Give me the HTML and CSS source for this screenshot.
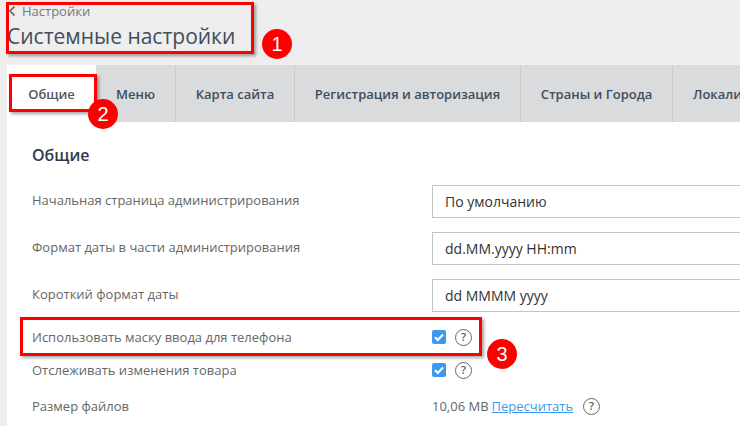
FILE: index.html
```html
<!DOCTYPE html>
<html lang="ru">
<head>
<meta charset="utf-8">
<title>Системные настройки</title>
<link rel="stylesheet" href="styles.css">
</head>
<body>
<header class="head">
  <a class="back"><svg class="chev" width="8" height="12" viewBox="0 0 8 12"><path d="M6.5 1.5 2 6l4.500 4.500" fill="none" stroke="#777" stroke-width="1.800"/></svg>Настройки</a>
  <h1 class="title">Системные настройки</h1>
</header>
<nav class="tabs">
  <a class="tab tab-active">Общие</a>
  <a class="tab t-menu">Меню</a>
  <a class="tab t-map">Карта сайта</a>
  <a class="tab t-reg">Регистрация и авторизация</a>
  <a class="tab t-geo">Страны и Города</a>
  <a class="tab t-loc">Локализация</a>
</nav>
<main class="panel">
  <h2 class="section">Общие</h2>
  <div class="row row-input"><label class="lbl">Начальная страница администрирования</label><div class="input">По умолчанию</div></div>
  <div class="row row-input"><label class="lbl">Формат даты в части администрирования</label><div class="input">dd.MM.yyyy HH:mm</div></div>
  <div class="row row-input"><label class="lbl">Короткий формат даты</label><div class="input">dd MMMM yyyy</div></div>
  <div class="row row-check r1"><label class="lbl">Использовать маску ввода для телефона</label><div class="val">
    <svg class="cb" width="14" height="14" viewBox="0 0 14 14"><rect width="14" height="14" rx="2" fill="#3d99ee"/><path d="M3 7.2 5.8 10 11 4.6" fill="none" stroke="#fff" stroke-width="2.2"/></svg>
    <span class="help">?</span></div></div>
  <div class="row row-check r2"><label class="lbl">Отслеживать изменения товара</label><div class="val">
    <svg class="cb" width="14" height="14" viewBox="0 0 14 14"><rect width="14" height="14" rx="2" fill="#3d99ee"/><path d="M3 7.2 5.8 10 11 4.6" fill="none" stroke="#fff" stroke-width="2.2"/></svg>
    <span class="help">?</span></div></div>
  <div class="row row-check r3"><label class="lbl">Размер файлов</label><div class="val"><span class="size">10,06 MB</span><a class="link">Пересчитать</a><span class="help help-far">?</span></div></div>
</main>
<div class="mark m1"></div>
<div class="badge b1">1</div>
<div class="mark m2"></div>
<div class="badge b2">2</div>
<div class="mark m3"></div>
<div class="badge b3">3</div>
</body>
</html>
```

FILE: styles.css
```css
html, body { margin: 0; padding: 0; }
body {
  width: 740px; height: 426px; overflow: hidden; position: relative;
  background: #eeeeee; font-family: "Open Sans", sans-serif; color: #666;
}
.head { padding: 2px 0 0 8px; height: 62px; box-sizing: border-box; }
.back { display: flex; align-items: center; gap: 6px; font-size: 13px; line-height: 18px; color: #777; }
.title { margin: 2px 0 0 -1px; font-size: 21px; line-height: 29px; font-weight: 400; color: #3f4d5c; }
.tabs {
  display: flex; margin-left: 7px; height: 57px; background: #dadbdd; margin-top: 3px; overflow: hidden;
}
.tab {
  box-sizing: border-box; flex: none; display: flex; align-items: center; justify-content: center;
  font-size: 13px; font-weight: 600; color: #3f4d5c; border-right: 1px solid #c8cace; margin-top: 1px;
}
.tab-active { width: 89px; background: #fff; color: #555; border-right: 0; margin-top: 0; }
.t-menu { width: 80px; }
.t-map { width: 119px; }
.t-reg { width: 226px; }
.t-geo { width: 152px; }
.t-loc { width: 120px; justify-content: flex-start; padding-left: 20px; border-right: 0; }
.panel { margin-left: 7px; background: #fff; height: 304px; padding: 22px 0 0 25px; box-sizing: border-box; }
.section { margin: 0 0 19px; font-size: 16px; line-height: 22px; font-weight: 600; color: #2f3b4a; }
.row { display: flex; align-items: center; }
.lbl { width: 400px; flex: none; font-size: 13px; color: #666; }
.row-input { height: 33px; margin-bottom: 14px; }
.row-input .lbl { padding-bottom: 4px; }
.input {
  width: 320px; flex: none; height: 33px; box-sizing: border-box; border: 1px solid #c4c4c4; padding-left: 12px;
  display: flex; align-items: center; font-size: 14px; color: #333; background: #fff;
}
.val { display: flex; align-items: center; font-size: 13px; color: #666; }
.row-check { height: 24px; }
.r1 { margin-top: -1px; }
.r2 { margin-top: 9px; }
.r3 { margin-top: 12px; }
.help {
  box-sizing: border-box; width: 17px; height: 17px; margin-left: 9px; border: 1.5px solid #666; border-radius: 50%;
  font-size: 11px; line-height: 14px; text-align: center; font-weight: 600; color: #555;
}
.size { margin-right: 3px; }
.link { color: #3d99ee; text-decoration: underline; }
.help-far { margin-left: 10px; }
.mark { position: absolute; box-sizing: border-box; border: 3px solid #f00; box-shadow: 2px 2px 3px rgba(0,0,0,.35); }
.m1 { left: 6px; top: 2px; width: 248px; height: 52px; }
.m2 { left: 9px; top: 74px; width: 88px; height: 38px; }
.m3 { left: 20px; top: 317px; width: 462px; height: 39px; }
.badge {
  position: absolute; width: 30px; height: 30px; border-radius: 50%; background: #f00; color: #fff;
  font-family: "Liberation Sans", sans-serif; font-size: 20px; line-height: 30px; text-align: center;
}
.b1 { left: 262px; top: 29px; }
.b2 { left: 88px; top: 99px; }
.b3 { left: 487px; top: 339px; }
```
